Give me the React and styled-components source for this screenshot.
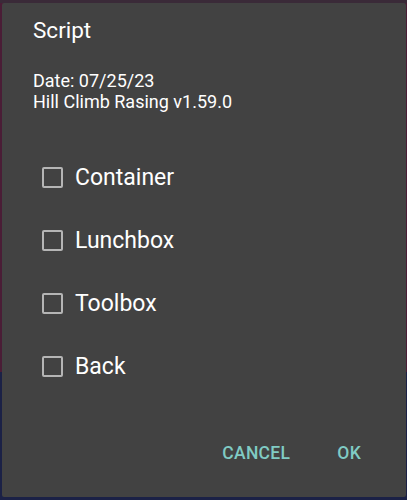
import styled, { createGlobalStyle } from "styled-components";

const GlobalStyle = createGlobalStyle`
    html, body {
        margin: 0;
        padding: 0;
    }
    body {
        width: 407px;
        height: 500px;
        overflow: hidden;
        font-family: Roboto, "Noto Sans", sans-serif;
        background: linear-gradient(
            to bottom,
            #3a2a38 0px,
            #3a2a38 3px,
            #4a1d36 3px,
            #4a1d36 372px,
            #1b2146 372px,
            #1b2146 100%
        );
    }
`;

const Backdrop = styled.div`
    padding: 3px 1px 3px 2px;
`;

const Dialog = styled.div`
    height: 494px;
    box-sizing: border-box;
    background: #424242;
    border-radius: 2px;
    display: flex;
    flex-direction: column;
    padding: 15px 0 0 31px;
    color: #fff;
`;

const Title = styled.h2`
    margin: 0;
    font-size: 22.5px;
    font-weight: 400;
    line-height: 25px;
`;

const Info = styled.div`
    margin-top: 27px;
    font-size: 18px;
    line-height: 21px;
`;

const List = styled.div`
    margin-top: 34px;
    padding-left: 9px;
    display: flex;
    flex-direction: column;
`;

const Row = styled.label`
    height: 63px;
    display: flex;
    align-items: center;
    gap: 12px;
    font-size: 23px;
`;

const Box = styled.span`
    width: 21px;
    height: 21px;
    box-sizing: border-box;
    border: 2px solid #b5b5b5;
    border-radius: 2px;
    flex-shrink: 0;
`;

const Buttons = styled.div`
    margin-top: auto;
    margin-bottom: 34px;
    display: flex;
    justify-content: flex-end;
    gap: 47px;
    padding-right: 45px;
`;

const Action = styled.button`
    background: none;
    border: none;
    padding: 0;
    font-family: Roboto, sans-serif;
    font-size: 17.5px;
    font-weight: 500;
    color: #80cbc4;
    letter-spacing: 0.3px;
    line-height: 20px;
`;

const items = ["Container", "Lunchbox", "Toolbox", "Back"];

const App = () => (
    <>
        <GlobalStyle />
        <Backdrop>
            <Dialog>
                <Title>Script</Title>
                <Info>
                    Date: 07/25/23
                    <br />
                    Hill Climb Rasing v1.59.0
                </Info>
                <List>
                    {items.map((item) => (
                        <Row key={item}>
                            <Box />
                            {item}
                        </Row>
                    ))}
                </List>
                <Buttons>
                    <Action>CANCEL</Action>
                    <Action>OK</Action>
                </Buttons>
            </Dialog>
        </Backdrop>
    </>
);

export default App;
